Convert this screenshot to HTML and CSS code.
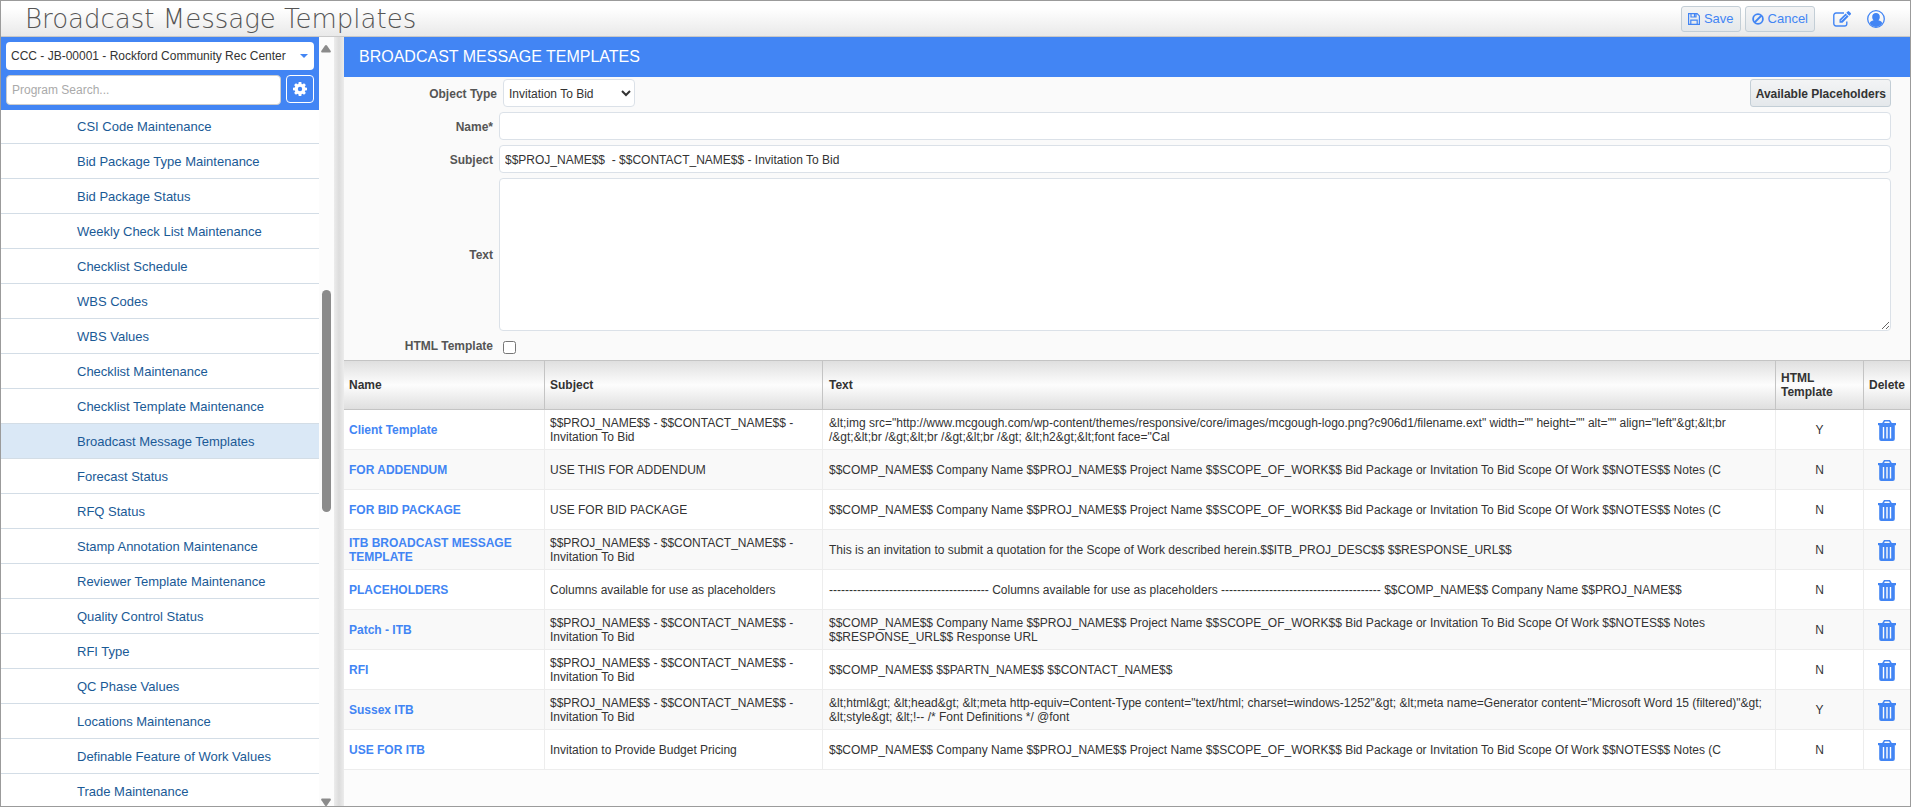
FILE: index.html
```html
<!DOCTYPE html>
<html lang="en">
<head>
<meta charset="utf-8">
<title>Broadcast Message Templates</title>
<link rel="stylesheet" href="styles.css">
</head>
<body>
<svg width="0" height="0" class="defs" aria-hidden="true">
  <symbol id="trash" viewBox="0 0 18 21">
    <path fill-rule="evenodd" d="M6 0h6l1.800 3H18v2.300h-1.200V19a2 2 0 0 1-2 2H3.200a2 2 0 0 1-2-2V5.300H0V3h4.200zM6.900 1.500L6.100 3h5.800l-.8-1.500zM4.800 7v11.500h1.400V7zm3.500 0v11.500h1.400V7zm3.500 0v11.500h1.400V7z"/>
  </symbol>
</svg>
<div class="app">
  <header class="topbar">
    <h1 class="app-title">Broadcast Message Templates</h1>
    <div class="actions">
      <button class="btn" type="button"><svg class="ico" viewBox="0 0 12 12"><path fill="none" stroke="currentColor" stroke-width="1.200" d="M.6.6h8.500l2.300 2.300v8.500H.6zM3 .6v3.400h5V.6M2.800 11.400V7.200h6.400v4.200M6.500 1v2.500"/></svg>Save</button>
      <button class="btn" type="button"><svg class="ico" viewBox="0 0 12 12"><circle cx="6" cy="6" r="4.900" fill="none" stroke="currentColor" stroke-width="1.800"/><path stroke="currentColor" stroke-width="1.800" d="M9.500 2.500l-7 7"/></svg>Cancel</button>
      <button class="icon-btn edit" type="button" aria-label="Edit"><svg width="18" height="16" viewBox="0 0 18 16"><path fill="none" stroke="currentColor" stroke-width="1.400" d="M11 2H3a2.200 2.200 0 0 0-2.200 2.200v8.600A2.200 2.200 0 0 0 3 15h8.600a2.200 2.200 0 0 0 2.200-2.200V10.500"/><path fill="currentColor" d="M6.500 11.700V8.600L12.600 2.500l3 3-6.100 6.200zM13.300 1.800L14.700.4a1 1 0 0 1 1.400 0l1.600 1.600a1 1 0 0 1 0 1.400l-1.400 1.400z"/><path stroke="#fff" stroke-width=".8" d="M8 9.800l5.300-5.300"/></svg></button>
      <button class="icon-btn" type="button" aria-label="User"><svg width="18" height="18" viewBox="0 0 18 18"><circle cx="9" cy="9" r="8.300" fill="none" stroke="currentColor" stroke-width="1.300"/><path fill="currentColor" d="M9 3a3.700 3.700 0 0 1 3.800 3.900c0 1.500-.6 2.700-1.400 3.400 2 .4 3.300 1.200 3.900 2.800A7.600 7.600 0 0 1 9 17a7.600 7.600 0 0 1-6.300-3.900c.6-1.600 1.900-2.400 3.900-2.800-.8-.7-1.400-1.900-1.400-3.400A3.700 3.700 0 0 1 9 3z"/></svg></button>
    </div>
  </header>
  <div class="body">
    <aside class="sidebar">
      <div class="side-head">
        <button class="project" type="button"><span>CCC - JB-00001 - Rockford Community Rec Center</span><svg width="8" height="4" viewBox="0 0 8 4"><path fill="#4285f4" d="M0 0h8L4 4z"/></svg></button>
        <div class="search-row">
          <input class="search" type="text" placeholder="Program Search..." aria-label="Program Search">
          <button class="gear" type="button" aria-label="Settings"><svg width="14" height="14" viewBox="0 0 14 14"><g fill="#fff"><circle cx="7" cy="7" r="5.300"/><path d="M5.700 0h2.600l.5 3H5.200zM5.700 14h2.600l.5-3H5.200zM0 5.700v2.600l3 .5V5.200zM14 5.700v2.600l-3 .5V5.200z"/><path transform="rotate(45 7 7)" d="M5.700 0h2.600l.5 3H5.200zM5.700 14h2.600l.5-3H5.200zM0 5.700v2.600l3 .5V5.200zM14 5.700v2.600l-3 .5V5.200z"/></g><circle cx="7" cy="7" r="2.200" fill="#4285f4"/></svg></button>
        </div>
      </div>
      <nav class="nav">
        <a href="#">CSI Code Maintenance</a>
        <a href="#">Bid Package Type Maintenance</a>
        <a href="#">Bid Package Status</a>
        <a href="#">Weekly Check List Maintenance</a>
        <a href="#">Checklist Schedule</a>
        <a href="#">WBS Codes</a>
        <a href="#">WBS Values</a>
        <a href="#">Checklist Maintenance</a>
        <a href="#">Checklist Template Maintenance</a>
        <a href="#" class="current">Broadcast Message Templates</a>
        <a href="#">Forecast Status</a>
        <a href="#">RFQ Status</a>
        <a href="#">Stamp Annotation Maintenance</a>
        <a href="#">Reviewer Template Maintenance</a>
        <a href="#">Quality Control Status</a>
        <a href="#">RFI Type</a>
        <a href="#">QC Phase Values</a>
        <a href="#">Locations Maintenance</a>
        <a href="#">Definable Feature of Work Values</a>
        <a href="#">Trade Maintenance</a>
      </nav>
    </aside>
    <div class="scroll" aria-hidden="true">
      <svg width="10" height="8" viewBox="0 0 10 8"><path fill="#8b8b8b" d="M4 .6q1-1.200 2 0l3.600 5.200q.8 1.600-.8 1.700H1.200q-1.600-.1-.8-1.700z"/></svg>
      <div class="track"><div class="thumb"></div></div>
      <svg width="10" height="8" viewBox="0 0 10 8"><path fill="#8b8b8b" d="M4 7.400q1 1.200 2 0l3.600-5.200Q10.400.6 8.800.5H1.200Q-.4.6.4 2.200z"/></svg>
    </div>
    <div class="splitter"></div>
    <main class="main">
      <h2 class="panel-title">BROADCAST MESSAGE TEMPLATES</h2>
      <form class="form">
        <label class="wide" for="otype">Object Type</label>
        <div class="first-row">
          <select id="otype" class="field"><option>Invitation To Bid</option></select>
          <button class="btn strong" type="button">Available Placeholders</button>
        </div>
        <label for="name">Name*</label>
        <input id="name" class="field" type="text">
        <label for="subject">Subject</label>
        <input id="subject" class="field" type="text" value="$$PROJ_NAME$$  - $$CONTACT_NAME$$ - Invitation To Bid">
        <label for="text">Text</label>
        <textarea id="text" class="field"></textarea>
        <label for="html">HTML Template</label>
        <div class="check"><input id="html" type="checkbox"></div>
      </form>
      <table class="grid">
        <colgroup><col class="c-name"><col class="c-subject"><col><col class="c-html"><col class="c-delete"></colgroup>
        <thead><tr><th>Name</th><th>Subject</th><th>Text</th><th>HTML Template</th><th>Delete</th></tr></thead>
        <tbody>
          <tr><td><a href="#">Client Template</a></td><td>$$PROJ_NAME$$ - $$CONTACT_NAME$$ - Invitation To Bid</td><td>&amp;lt;img src="http://www.mcgough.com/wp-content/themes/responsive/core/images/mcgough-logo.png?c906d1/filename.ext" width="" height="" alt="" align="left"&amp;gt;&amp;lt;br /&amp;gt;&amp;lt;br /&amp;gt;&amp;lt;br /&amp;gt;&amp;lt;br /&amp;gt; &amp;lt;h2&amp;gt;&amp;lt;font face="Cal</td><td>Y</td><td><button class="del" type="button" aria-label="Delete"><svg><use href="#trash"/></svg></button></td></tr>
          <tr><td><a href="#">FOR ADDENDUM</a></td><td>USE THIS FOR ADDENDUM</td><td>$$COMP_NAME$$ Company Name $$PROJ_NAME$$ Project Name $$SCOPE_OF_WORK$$ Bid Package or Invitation To Bid Scope Of Work $$NOTES$$ Notes (C</td><td>N</td><td><button class="del" type="button" aria-label="Delete"><svg><use href="#trash"/></svg></button></td></tr>
          <tr><td><a href="#">FOR BID PACKAGE</a></td><td>USE FOR BID PACKAGE</td><td>$$COMP_NAME$$ Company Name $$PROJ_NAME$$ Project Name $$SCOPE_OF_WORK$$ Bid Package or Invitation To Bid Scope Of Work $$NOTES$$ Notes (C</td><td>N</td><td><button class="del" type="button" aria-label="Delete"><svg><use href="#trash"/></svg></button></td></tr>
          <tr><td><a href="#">ITB BROADCAST MESSAGE TEMPLATE</a></td><td>$$PROJ_NAME$$ - $$CONTACT_NAME$$ - Invitation To Bid</td><td>This is an invitation to submit a quotation for the Scope of Work described herein.$$ITB_PROJ_DESC$$ $$RESPONSE_URL$$</td><td>N</td><td><button class="del" type="button" aria-label="Delete"><svg><use href="#trash"/></svg></button></td></tr>
          <tr><td><a href="#">PLACEHOLDERS</a></td><td>Columns available for use as placeholders</td><td>---------------------------------------- Columns available for use as placeholders ---------------------------------------- $$COMP_NAME$$ Company Name $$PROJ_NAME$$</td><td>N</td><td><button class="del" type="button" aria-label="Delete"><svg><use href="#trash"/></svg></button></td></tr>
          <tr><td><a href="#">Patch - ITB</a></td><td>$$PROJ_NAME$$ - $$CONTACT_NAME$$ - Invitation To Bid</td><td>$$COMP_NAME$$ Company Name $$PROJ_NAME$$ Project Name $$SCOPE_OF_WORK$$ Bid Package or Invitation To Bid Scope Of Work $$NOTES$$ Notes $$RESPONSE_URL$$ Response URL</td><td>N</td><td><button class="del" type="button" aria-label="Delete"><svg><use href="#trash"/></svg></button></td></tr>
          <tr><td><a href="#">RFI</a></td><td>$$PROJ_NAME$$ - $$CONTACT_NAME$$ - Invitation To Bid</td><td>$$COMP_NAME$$ $$PARTN_NAME$$ $$CONTACT_NAME$$</td><td>N</td><td><button class="del" type="button" aria-label="Delete"><svg><use href="#trash"/></svg></button></td></tr>
          <tr><td><a href="#">Sussex ITB</a></td><td>$$PROJ_NAME$$ - $$CONTACT_NAME$$ - Invitation To Bid</td><td>&amp;lt;html&amp;gt; &amp;lt;head&amp;gt; &amp;lt;meta http-equiv=Content-Type content="text/html; charset=windows-1252"&amp;gt; &amp;lt;meta name=Generator content="Microsoft Word 15 (filtered)"&amp;gt; &amp;lt;style&amp;gt; &amp;lt;!-- /* Font Definitions */ @font</td><td>Y</td><td><button class="del" type="button" aria-label="Delete"><svg><use href="#trash"/></svg></button></td></tr>
          <tr><td><a href="#">USE FOR ITB</a></td><td>Invitation to Provide Budget Pricing</td><td>$$COMP_NAME$$ Company Name $$PROJ_NAME$$ Project Name $$SCOPE_OF_WORK$$ Bid Package or Invitation To Bid Scope Of Work $$NOTES$$ Notes (C</td><td>N</td><td><button class="del" type="button" aria-label="Delete"><svg><use href="#trash"/></svg></button></td></tr>
        </tbody>
      </table>
    </main>
  </div>
</div>
</body>
</html>
```
FILE: styles.css
```css
* { box-sizing: border-box; }
body { margin: 0; color: #333; font: 12px/14px "Liberation Sans", Arial, sans-serif; }
button, input, select, textarea { margin: 0; font: inherit; color: inherit; }
button { cursor: pointer; }
.defs { position: absolute; }
.app { display: flex; flex-direction: column; height: 100vh; border: 1px solid #9b9b9b; background: #fcfcfc; overflow: hidden; }

.topbar { display: flex; align-items: center; justify-content: space-between; height: 36px; padding: 0 25px 0 24px; border-bottom: 1px solid #c8c8c8; background: linear-gradient(#fff 20%, #e9e9e9); }
.app-title { margin: 0; font: 200 26px/34px "DejaVu Sans Light", "DejaVu Sans", sans-serif; color: #555; }
.actions { display: flex; align-items: center; gap: 4px; color: #4285f4; }
.btn { display: flex; align-items: center; gap: 4px; height: 26px; padding: 0 6px; border: 1px solid #c3ced6; border-radius: 3px; background: linear-gradient(#f3f4f5, #e4e8eb); font-size: 13px; }
.ico { width: 12px; height: 12px; }
.icon-btn { display: flex; padding: 0; border: 0; background: none; }
.edit { margin: 0 12px 0 14px; }

.body { display: flex; flex: 1; min-height: 0; }
.sidebar { display: flex; flex-direction: column; width: 318px; background: #fff; font-size: 13px; overflow: hidden; }
.side-head { display: flex; flex-direction: column; gap: 5px; padding: 5px; background: #4285f4; }
.project { display: flex; align-items: center; justify-content: space-between; height: 28px; padding: 0 6px 0 5px; border: 0; border-radius: 4px; background: #fff; font-size: 12px; }
.search-row { display: flex; align-items: flex-start; gap: 5px; }
.search { flex: 1; min-width: 0; height: 30px; padding: 0 5px; border: 1px solid #ccc; border-radius: 4px; background: #fff; font-size: 12px; }
.search::placeholder { color: #aaa; }
.gear { display: flex; align-items: center; justify-content: center; width: 28px; height: 28px; padding: 0; border: 1px solid #fff; border-radius: 4px; background: none; }
.nav { display: flex; flex-direction: column; }
.nav a { flex: none; height: 35px; padding-left: 76px; border-bottom: 1px solid #d3dde6; line-height: 36px; color: #1a5a96; text-decoration: none; }
.nav a:first-child { height: 34px; line-height: 34px; }
.nav .current { background: #dae8f6; }

.scroll { display: flex; flex-direction: column; align-items: center; width: 15px; padding: 8px 3px 0 2px; background: #fcfcfc; }
.scroll svg { flex: none; }
.track { flex: 1; width: 9px; padding-top: 237px; }
.thumb { height: 222px; border-radius: 5px; background: #8b8b8b; }
.splitter { width: 10px; background: linear-gradient(to right, #ececec, #dcdcdc 50%, #ececec); }

.main { flex: 1; min-width: 0; }
.panel-title { margin: 0; padding: 0 15px; background: #4285f4; color: #fff; font-size: 16px; font-weight: 400; line-height: 40px; }
.form { display: grid; grid-template-columns: 149px 1fr; column-gap: 6px; row-gap: 5px; align-items: center; padding: 2px 19px 5px 0; background: #fafafa; }
.form label { padding-top: 1px; text-align: right; font-weight: 700; color: #555; }
.form .wide { margin-right: -4px; }
.first-row { display: flex; justify-content: space-between; padding-left: 4px; }
.field { height: 28px; padding: 1px 5px 0; border: 1px solid #dbe1e8; border-radius: 4px; background: #fff; }
select.field { width: 132px; padding: 1px 1px 0; }
textarea.field { display: block; height: 153px; resize: vertical; }
.strong { height: 28px; padding: 1px 4px 0 5px; font-size: 12px; font-weight: 700; color: #333; }
.check { display: flex; align-items: center; height: 19px; padding: 3px 0 0 4px; }
.check input { width: 13px; height: 13px; }

.grid { width: 100%; table-layout: fixed; border-collapse: separate; border-spacing: 0; }
.c-name { width: 201px; }
.c-subject { width: 278px; }
.c-html { width: 88px; }
.c-delete { width: 46px; }
.grid th { height: 50px; padding: 0 5px; border: solid #c4c4c4; border-width: 1px 1px 1px 0; background: linear-gradient(#dfdfdf, #fdfdfd 50%, #dfdfdf); text-align: left; }
.grid td { height: 40px; padding: 0 5px; border: solid #ededed; border-width: 0 1px 1px 0; background: #fff; }
.grid tr > :nth-child(3) { padding-left: 6px; }
.grid tr > :last-child { border-right: 0; }
.grid tbody tr:nth-child(even) td { background: #f9f9f9; }
.grid td:nth-child(4) { text-align: center; }
.grid td a { color: #4285f4; font-weight: 700; text-decoration: none; }
.del { display: block; margin: 2px auto 0; padding: 0; border: 0; background: none; color: #4285f4; }
.del svg { display: block; width: 18px; height: 21px; fill: currentColor; }
```
